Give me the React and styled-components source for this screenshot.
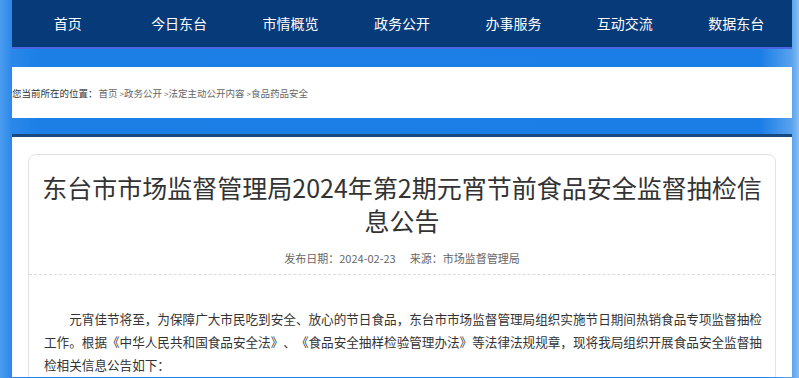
import { styled, createGlobalStyle } from "styled-components";

const NAV_ITEMS = ["首页", "今日东台", "市情概览", "政务公开", "办事服务", "互动交流", "数据东台"];
const CRUMBS = ["首页", "政务公开", "法定主动公开内容", "食品药品安全"];

const GlobalStyle = createGlobalStyle`
  html, body {
    margin: 0;
    padding: 0;
  }
  body {
    font-family: "Noto Sans CJK SC", "Noto Sans", sans-serif;
    background: linear-gradient(90deg, #4c9df0 0, #2a88ea 12px, #1b7fe6 40px, #1a7ee6 760px, #5aa3ee 792px, #86bdf0 100%);
    height: 378px;
    overflow: hidden;
    text-spacing-trim: space-all;
  }
`;

const App = () => {
  return (
    <>
      <GlobalStyle />
      <Page>
        <Nav>
          {NAV_ITEMS.map((item) => (
            <NavItem key={item}>{item}</NavItem>
          ))}
        </Nav>
        <Breadcrumb>
          <Label>您当前所在的位置：</Label>
          {CRUMBS.map((c, i) => (
            <Crumb key={c}>
              {i > 0 && <Sep>&gt;</Sep>}
              {c}
            </Crumb>
          ))}
        </Breadcrumb>
        <Divider />
        <Main>
          <Card>
            <Title>东台市市场监督管理局2024年第2期元宵节前食品安全监督抽检信息公告</Title>
            <Meta>
              <span>发布日期：2024-02-23</span>
              <span>来源：市场监督管理局</span>
            </Meta>
            <Body>
              元宵佳节将至，为保障广大市民吃到安全、放心的节日食品，东台市市场监督管理局组织实施节日期间热销食品专项监督抽检工作。根据《中华人民共和国食品安全法》、《食品安全抽样检验管理办法》等法律法规规章，现将我局组织开展食品安全监督抽检相关信息公告如下：
            </Body>
          </Card>
        </Main>
      </Page>
    </>
  );
};

export default App;

const Page = styled.div`
  width: 780px;
  margin-left: 12px;
`;

const Nav = styled.nav`
  display: grid;
  grid-template-columns: repeat(7, 1fr);
  height: 47px;
  background-color: #073a79;
  border-bottom: 2px solid #4b66e2;
`;

const NavItem = styled.a`
  display: flex;
  align-items: center;
  justify-content: center;
  color: #ffffff;
  font-size: 14px;
  padding-bottom: 1px;
  cursor: pointer;
`;

const Breadcrumb = styled.div`
  display: flex;
  align-items: center;
  height: 51px;
  margin-top: 18px;
  background-color: #ffffff;
  font-size: 9.5px;
  color: #666;
`;

const Label = styled.span`
  color: #333;
  margin-right: 1px;
`;

const Crumb = styled.a`
  color: #666;
`;

const Sep = styled.span`
  font-size: 8px;
  margin-left: 2px;
`;

const Divider = styled.div`
  height: 3px;
  margin-top: 16px;
  background-color: #17497f;
`;

const Main = styled.div`
  background-color: #ffffff;
  padding: 17px 16px 0;
  height: 240px;
  box-sizing: border-box;
  overflow: hidden;
`;

const Card = styled.article`
  border: 1px solid #e2e2e2;
  border-radius: 8px;
  padding: 16px 12px 0;
  height: 260px;
  box-sizing: border-box;
`;

const Title = styled.h1`
  margin: 0;
  font-size: 25px;
  font-weight: 400;
  line-height: 33px;
  color: #333;
  text-align: center;
`;

const Meta = styled.div`
  display: flex;
  justify-content: center;
  gap: 14px;
  margin: 0 -12px;
  padding: 13px 0 8px;
  font-size: 11px;
  line-height: 16px;
  color: #666;
  border-bottom: 1px dashed #dcdcdc;
`;

const Body = styled.p`
  margin: 32px 0 0;
  padding: 0 1px 0 3px;
  width: 720px;
  font-size: 12.6px;
  line-height: 23px;
  color: #333;
  text-indent: 2em;
`;
